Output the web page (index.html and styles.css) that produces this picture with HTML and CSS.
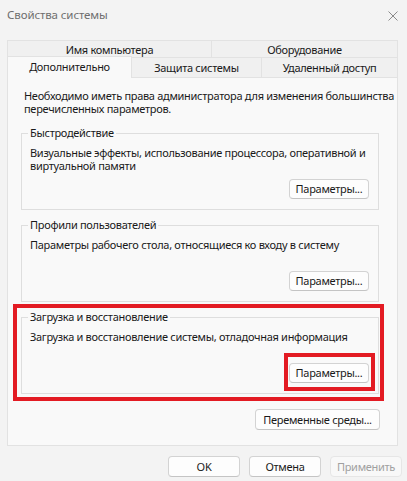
FILE: index.html
```html
<!DOCTYPE html>
<html lang="ru">
<head>
<meta charset="utf-8">
<title>Свойства системы</title>
<link rel="stylesheet" href="styles.css">
</head>
<body>
<div class="window">
  <div class="titlebar">
    <span class="title">Свойства системы</span>
    <svg class="close" width="10" height="10" viewBox="0 0 10 10"><path d="M0.5 0.5 L9.5 9.5 M9.5 0.5 L0.5 9.5" stroke="#8a8a8a" stroke-width="1" fill="none"/></svg>
  </div>
  <div class="tabs">
    <div class="tabrow row1">
      <div class="tab t-name">Имя компьютера</div>
      <div class="tab t-hw">Оборудование</div>
    </div>
    <div class="tabrow row2">
      <div class="tab t-adv selected">Дополнительно</div>
      <div class="tab t-prot">Защита системы</div>
      <div class="tab t-remote">Удаленный доступ</div>
    </div>
  </div>
  <div class="panel">
    <p class="intro">Необходимо иметь права администратора для изменения большинства перечисленных параметров.</p>
    <fieldset class="group">
      <legend>Быстродействие</legend>
      <div class="gbody">
        <p>Визуальные эффекты, использование процессора, оперативной и виртуальной памяти</p>
        <div class="gbtn"><button class="btn">Параметры...</button></div>
      </div>
    </fieldset>
    <fieldset class="group">
      <legend>Профили пользователей</legend>
      <div class="gbody">
        <p>Параметры рабочего стола, относящиеся ко входу в систему</p>
        <div class="gbtn"><button class="btn">Параметры...</button></div>
      </div>
    </fieldset>
    <fieldset class="group marked">
      <legend>Загрузка и восстановление</legend>
      <div class="gbody">
        <p>Загрузка и восстановление системы, отладочная информация</p>
        <div class="gbtn"><span class="mark-btn"><button class="btn">Параметры...</button></span></div>
      </div>
    </fieldset>
    <div class="envrow"><button class="btn env">Переменные среды...</button></div>
  </div>
  <div class="footer">
    <button class="btn fbtn">OK</button>
    <button class="btn fbtn">Отмена</button>
    <button class="btn fbtn disabled">Применить</button>
  </div>
</div>
</body>
</html>
```
FILE: styles.css
```css
* { box-sizing: border-box; }
html, body { margin: 0; padding: 0; }
body {
  background: #f3f3f3;
  font-family: "Noto Sans", "Open Sans", sans-serif;
  font-size: 11px;
  letter-spacing: -0.3px;
  color: #1a1a1a;
  width: 407px;
  height: 481px;
  overflow: hidden;
}
.window { width: 407px; }
.titlebar {
  height: 40px;
  display: flex;
  align-items: flex-start;
  justify-content: space-between;
  padding: 7px 9px 0 7px;
}
.title { font-size: 11.5px; letter-spacing: -0.1px; color: #6e6e6e; line-height: 16px; }
.close { margin-top: 4px; }

.tabs { margin-left: 7px; width: 391px; }
.tabrow { display: flex; }
.tab {
  display: flex;
  align-items: center;
  justify-content: center;
  background: #f0f0f0;
  border: 1px solid #e2e2e2;
  line-height: 13px;
  white-space: nowrap;
}
.row1 { height: 17px; }
.row1 .tab { border-bottom: none; }
.t-name { width: 205px; }
.t-hw { width: 186px; border-left: none; }
.row2 { height: 20px; align-items: flex-end; }
.row2 .tab { height: 20px; border-bottom: none; border-left: none; }
.t-adv { width: 125px; }
.t-prot { width: 130px; }
.t-remote { width: 136px; }
.tab.selected {
  background: #f9f9f9;
  height: 22px;
  margin-top: -2px;
  border-left: 1px solid #e2e2e2;
  position: relative;
  z-index: 1;
  margin-bottom: -1px;
  padding-bottom: 3px;
}

.panel {
  margin-left: 7px;
  width: 391px;
  height: 369px;
  background: #f9f9f9;
  border: 1px solid #e2e2e2;
  padding: 11px 4px 0 13px;
}
.intro { margin: 0 -10px 0 3px; line-height: 13px; }

.group {
  margin: 8px 14px 0 0;
  padding: 0 9px 0 8px;
  border: 1px solid #dedede;
  height: 84px;
  min-width: 0;
  position: relative;
}
.group:first-of-type { margin-top: 11px; }
.group legend {
  padding: 0 2px;
  margin-left: -2px;
  line-height: 14px;
}
.gbody {
  height: 69px;
  display: flex;
  flex-direction: column;
  padding-top: 6px;
}
.gbody p { margin: 0; line-height: 13px; }
.gbtn { margin-top: auto; display: flex; justify-content: flex-end; padding-bottom: 10px; }

.btn {
  font-family: inherit;
  font-size: 11px;
  letter-spacing: -0.3px;
  color: #1a1a1a;
  background: #fdfdfd;
  border: 1px solid #d3d3d3;
  border-bottom-color: #c4c4c4;
  border-radius: 4px;
  height: 20px;
  width: 80px;
  padding: 0;
  line-height: 18px;
}

.marked::after {
  content: "";
  position: absolute;
  left: -9px;
  right: -6px;
  top: -20px;
  bottom: -8px;
  border: 4px solid #e31b23;
  pointer-events: none;
}
.mark-btn { position: relative; display: inline-block; height: 20px; }
.mark-btn::after {
  content: "";
  position: absolute;
  left: -5px;
  right: -6px;
  top: -10px;
  bottom: -8px;
  border: 4px solid #e31b23;
  pointer-events: none;
}

.envrow { display: flex; justify-content: flex-end; margin-top: 15px; padding-right: 13px; }
.env { width: 125px; height: 21px; }

.footer {
  display: flex;
  justify-content: flex-end;
  gap: 9px;
  padding: 10px 5px 0 0;
}
.fbtn { width: 72px; height: 21px; }
.fbtn.disabled { color: #a0a0a0; border-color: #e6e6e6; background: #f8f8f8; }
```
